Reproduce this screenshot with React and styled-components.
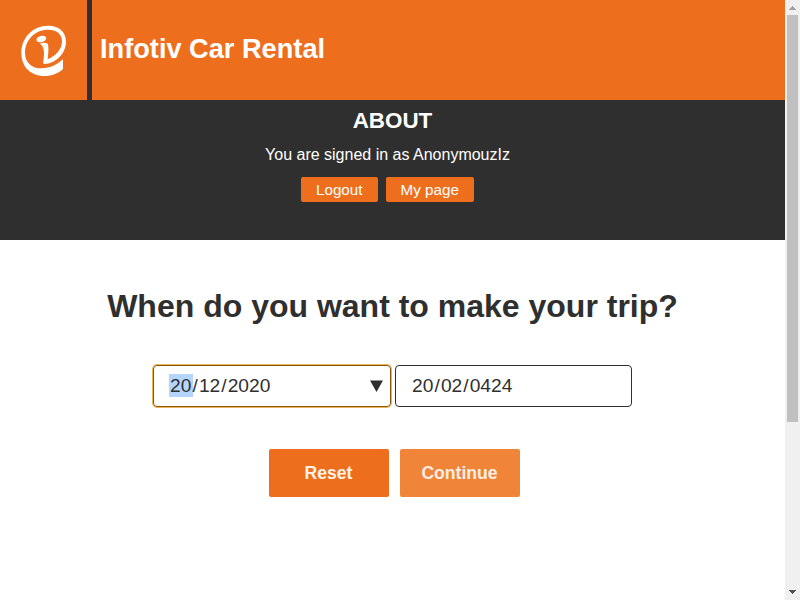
import React from "react";
import styled, { createGlobalStyle } from "styled-components";

const ORANGE = "#ed6f1e";
const DARK = "#2f2f2f";

const Global = createGlobalStyle`
  * { box-sizing: border-box; }
  body {
    margin: 0;
    overflow: hidden;
    background: #fff;
    color: ${DARK};
    font-family: "Liberation Sans", Arial, sans-serif;
  }
  h1, h2, p { margin: 0; }
  button { font-family: inherit; border: 0; padding: 0; }
`;

const Window = styled.div`
  display: flex;
  width: 800px;
  height: 600px;
`;
const Page = styled.div`
  width: 785px;
  display: flex;
  flex-direction: column;
`;
const Header = styled.header`
  height: 100px;
  display: flex;
  background: ${ORANGE};
`;
const LogoBox = styled.div`
  width: 92px;
  border-right: 5px solid ${DARK};
  svg { display: block; }
`;
const Title = styled.h1`
  padding: 33px 0 0 8px;
  font-size: 27.2px;
  line-height: 31px;
  color: #fff;
`;
const Account = styled.section`
  height: 140px;
  padding-top: 8px;
  background: ${DARK};
  color: #fff;
  display: flex;
  flex-direction: column;
  align-items: center;
`;
const About = styled.h2`
  font-size: 22.4px;
  line-height: 26px;
`;
const SignedIn = styled.p`
  margin: 12px 10px 0 0;
  font-size: 16px;
  line-height: 18px;
`;
const AccountButtons = styled.div`
  display: flex;
  gap: 8px;
  margin: 13px 10px 0 0;
`;
const SmallButton = styled.button`
  width: ${(p) => p.$width}px;
  height: 25px;
  border-radius: 2px;
  background: ${ORANGE};
  color: #fff;
  font-size: 15.2px;
  padding-right: 0.5px;
`;
const Main = styled.main`
  display: flex;
  flex-direction: column;
  align-items: center;
`;
const Question = styled.h1`
  margin-top: 48px;
  font-size: 32px;
  line-height: 36px;
`;
const Dates = styled.div`
  display: flex;
  gap: 4px;
  margin-top: 41px;
`;
const DateField = styled.div`
  width: ${(p) => p.$width}px;
  height: 42px;
  display: flex;
  align-items: flex-start;
  padding: 8px 7px 0 15px;
  border: 1px solid ${(p) => (p.$focused ? "#8a5608" : DARK)};
  border-radius: 4px;
  box-shadow: ${(p) => (p.$focused ? "0 0 0 1px #edb550" : "none")};
  font-size: 19.2px;
  line-height: 23px;
  svg { margin: 6px 0 0 auto; }
`;
const Part = styled.span`
  height: 23px;
  padding: 0 1px;
  background: ${(p) => (p.$selected ? "#b4d5fe" : "transparent")};
`;
const Day = styled(Part)`
  width: 23.6px;
`;
const Actions = styled.div`
  display: flex;
  gap: 11px;
  margin: 42px 0 0 4px;
`;
const ActionButton = styled.button`
  width: 120px;
  height: 48px;
  border-radius: 2px;
  background: ${(p) => (p.$light ? "#f08438" : ORANGE)};
  color: ${(p) => (p.$light ? "#ffeee2" : "#fff1e8")};
  font-size: 17.6px;
  font-weight: bold;
  padding-right: 1px;
`;
const Scrollbar = styled.div`
  width: 15px;
  height: 600px;
  display: flex;
  flex-direction: column;
  align-items: center;
  background: #f0f0f0;
  svg { display: block; flex: none; }
`;
const Thumb = styled.div`
  width: 11px;
  height: 407px;
  margin-bottom: auto;
  background: #c0c0c0;
`;

const Logo = () => (
  <svg width="87" height="100" viewBox="0 0 261 300" fill="#fff">
    <path
      fillRule="evenodd"
      d="M189 178V207C176 220 156 228 133 228C91 228 64 199 64 159C64 113 98 77 145 77C178 77 198 96 198 125C198 160 168 190 133 192C129 192 129 189 130 184C133 167 133 148 127 138L120 131C128 127 137 127 144 132C147 148 144 164 143 178C166 169 186 149 186 124C186 102 170 89 144 89C105 89 75 120 75 158C75 188 95 205 125 205C151 205 172 193 189 178Z"
    />
    <ellipse cx="124" cy="117" rx="15" ry="9.5" transform="rotate(-14 124 117)" />
  </svg>
);

const DateInput = ({ value, focused, width }) => {
  const [day, month, year] = value.split("/");
  return (
    <DateField $focused={focused} $width={width}>
      <Day $selected={focused}>{day}</Day>/<Part>{month}</Part>/<Part>{year}</Part>
      {focused && (
        <svg width="13" height="12" viewBox="0 0 13 12">
          <path d="M0 .5H13L6.5 12Z" fill={DARK} />
        </svg>
      )}
    </DateField>
  );
};

export default function App() {
  return (
    <>
      <Global />
      <Window>
        <Page>
          <Header>
            <LogoBox><Logo /></LogoBox>
            <Title>Infotiv Car Rental</Title>
          </Header>
          <Account>
            <About>ABOUT</About>
            <SignedIn>You are signed in as AnonymouzIz</SignedIn>
            <AccountButtons>
              <SmallButton $width={77}>Logout</SmallButton>
              <SmallButton $width={88}>My page</SmallButton>
            </AccountButtons>
          </Account>
          <Main>
            <Question>When do you want to make your trip?</Question>
            <Dates>
              <DateInput value="20/12/2020" focused width={238} />
              <DateInput value="20/02/0424" width={237} />
            </Dates>
            <Actions>
              <ActionButton>Reset</ActionButton>
              <ActionButton $light>Continue</ActionButton>
            </Actions>
          </Main>
        </Page>
        <Scrollbar>
          <svg width="15" height="15" shapeRendering="crispEdges">
            <path d="M7 6h1v1h1v1h1v1h1v1H4V9h1V8h1V7h1z" fill="#a3a3a3" />
          </svg>
          <Thumb />
          <svg width="15" height="15" shapeRendering="crispEdges">
            <path d="M4 5h7v1h-1v1H9v1H8v1H7V8H6V7H5V6H4z" fill="#505050" />
          </svg>
        </Scrollbar>
      </Window>
    </>
  );
}
